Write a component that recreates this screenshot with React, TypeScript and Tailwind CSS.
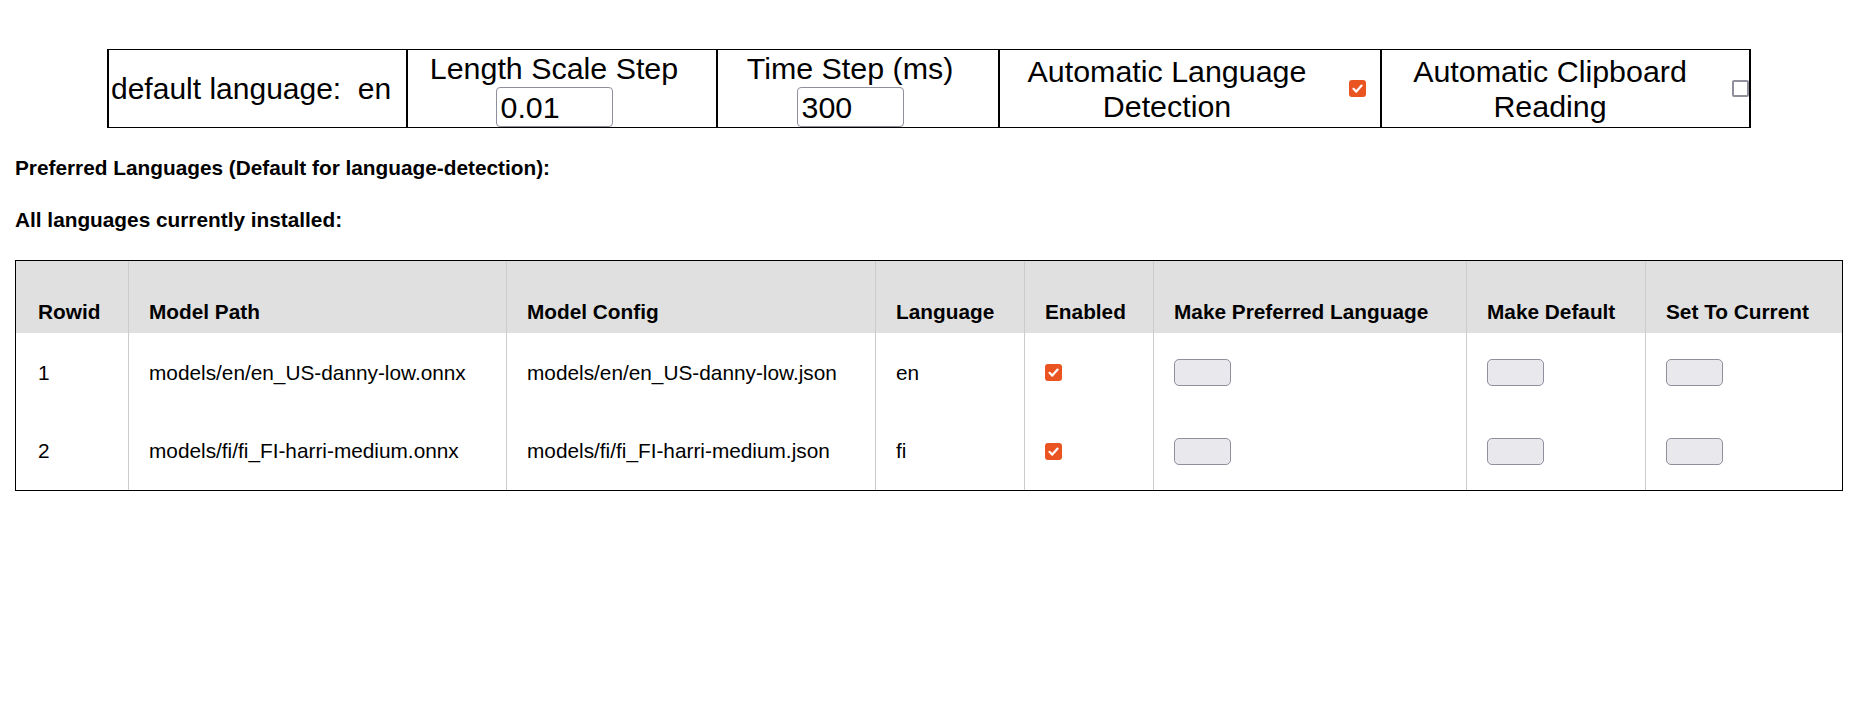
import React from 'react';

interface LangRow {
  rowid: number;
  modelPath: string;
  modelConfig: string;
  language: string;
  enabled: boolean;
}

const rows: LangRow[] = [
  {
    rowid: 1,
    modelPath: 'models/en/en_US-danny-low.onnx',
    modelConfig: 'models/en/en_US-danny-low.json',
    language: 'en',
    enabled: true,
  },
  {
    rowid: 2,
    modelPath: 'models/fi/fi_FI-harri-medium.onnx',
    modelConfig: 'models/fi/fi_FI-harri-medium.json',
    language: 'fi',
    enabled: true,
  },
];

function Checkbox({ checked }: { checked: boolean }) {
  if (checked) {
    return (
      <span className="inline-flex w-[17px] h-[17px] shrink-0 items-center justify-center rounded-[3px] bg-[#e95420]">
        <svg width="17" height="17" viewBox="0 0 17 17" fill="none">
          <path d="M4.5 8.8 L7.3 11.6 L12.6 5.6" stroke="white" strokeWidth="2.2" strokeLinecap="round" strokeLinejoin="round" />
        </svg>
      </span>
    );
  }
  return <span className="inline-block w-[17px] h-[17px] shrink-0 rounded-[2px] border-2 border-[#8f8f9d] bg-white" />;
}

function EmptyButton() {
  return <button className="w-[57px] h-[27px] rounded-[5px] border border-[#8f8f9d] bg-[#e9e9ed]" />;
}

const headers = [
  'Rowid',
  'Model Path',
  'Model Config',
  'Language',
  'Enabled',
  'Make Preferred Language',
  'Make Default',
  'Set To Current',
];

export default function App() {
  return (
    <div className="min-h-screen bg-white text-black font-['Liberation_Sans',Arial,sans-serif]">
      <div className="pt-[49px]">
        {/* settings bar */}
        <div className="ml-[107px] flex w-[1644px] h-[79px] border-y border-l-2 border-black">
          <div className="w-[299px] shrink-0 border-r-2 border-black flex items-center pl-[2px] text-[30px] leading-[36px] whitespace-pre">
            default language:  en
          </div>
          <div className="w-[310px] shrink-0 border-r-2 border-black flex flex-col items-center justify-between pt-[1px] pr-[16px]">
            <span className="text-[30.4px] leading-[34px]">Length Scale Step</span>
            <input
              defaultValue="0.01"
              className="w-[117px] h-[40px] rounded-[4px] border border-[#8f8f9d] px-[4px] text-[30.4px] leading-[34px] outline-none"
            />
          </div>
          <div className="w-[282px] shrink-0 border-r-2 border-black flex flex-col items-center justify-between pt-[1px] pr-[16px]">
            <span className="text-[30.4px] leading-[34px]">Time Step (ms)</span>
            <input
              defaultValue="300"
              className="w-[107px] h-[40px] rounded-[4px] border border-[#8f8f9d] px-[4px] text-[30.4px] leading-[34px] outline-none"
            />
          </div>
          <div className="w-[382px] shrink-0 border-r-2 border-black flex items-center">
            <div className="flex-1 text-center text-[30.4px] leading-[34.5px]">
              Automatic Language
              <br />
              Detection
            </div>
            <span className="ml-[15px] mr-[14px] flex">
              <Checkbox checked />
            </span>
          </div>
          <div className="w-[369px] shrink-0 border-r-2 border-black flex items-center">
            <div className="flex-1 text-center text-[30.4px] leading-[34.5px]">
              Automatic Clipboard
              <br />
              Reading
            </div>
            <span className="ml-[14px] flex">
              <Checkbox checked={false} />
            </span>
          </div>
        </div>

        <div className="ml-[15px] mt-[28px] text-[20.8px] leading-[24px] font-bold">
          Preferred Languages (Default for language-detection):
        </div>
        <div className="ml-[15px] mt-[28px] text-[20.8px] leading-[24px] font-bold">
          All languages currently installed:
        </div>

        {/* installed languages table */}
        <div className="ml-[15px] mt-[28px] w-[1828px] border border-black text-[20.8px] leading-[24px]">
          <div className="grid grid-cols-[112px_378px_369px_149px_129px_313px_179px_197px] bg-[#e0e0e0]">
            {headers.map((h, i) => (
              <div
                key={h}
                className={
                  i === 0
                    ? 'h-[72px] flex items-end pb-[9px] pl-[22px] font-bold whitespace-nowrap'
                    : 'h-[72px] flex items-end pb-[9px] pl-[20px] font-bold whitespace-nowrap border-l border-[#cccccc]'
                }
              >
                {h}
              </div>
            ))}
          </div>
          {rows.map((r, idx) => {
            const h = idx === 0 ? 'h-[79px]' : 'h-[78px]';
            const cell = `${h} flex items-center pl-[20px] border-l border-[#cccccc] whitespace-nowrap`;
            return (
              <div key={r.rowid} className="grid grid-cols-[112px_378px_369px_149px_129px_313px_179px_197px]">
                <div className={`${h} flex items-center pl-[22px]`}>{r.rowid}</div>
                <div className={cell}>{r.modelPath}</div>
                <div className={cell}>{r.modelConfig}</div>
                <div className={cell}>{r.language}</div>
                <div className={cell}>
                  <Checkbox checked={r.enabled} />
                </div>
                <div className={cell}>
                  <EmptyButton />
                </div>
                <div className={cell}>
                  <EmptyButton />
                </div>
                <div className={cell}>
                  <EmptyButton />
                </div>
              </div>
            );
          })}
        </div>
      </div>
    </div>
  );
}
